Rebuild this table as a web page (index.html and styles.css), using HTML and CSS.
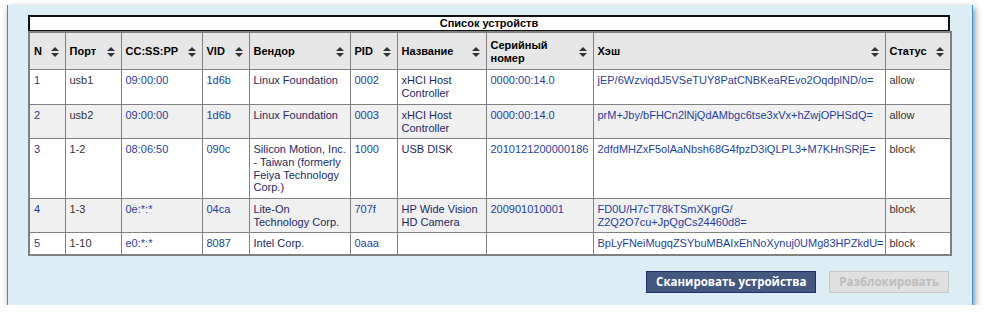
FILE: index.html
```html
<!DOCTYPE html>
<html lang="ru">
<head>
<meta charset="utf-8">
<title>Список устройств</title>
<link rel="stylesheet" href="styles.css">
</head>
<body>
<div class="panel">
  <div class="caption">Список устройств</div>
  <table class="devices">
    <colgroup>
      <col class="c-n"><col class="c-port"><col class="c-cc"><col class="c-vid"><col class="c-vendor"><col class="c-pid"><col class="c-name"><col class="c-serial"><col class="c-hash"><col class="c-status">
    </colgroup>
    <thead>
      <tr>
        <th><div class="th"><span>N</span><svg class="sort" viewBox="0 0 8 10"><path d="M4 0L8 4H0Z M0 6H8L4 10Z"/></svg></div></th>
        <th><div class="th"><span>Порт</span><svg class="sort" viewBox="0 0 8 10"><path d="M4 0L8 4H0Z M0 6H8L4 10Z"/></svg></div></th>
        <th><div class="th"><span>CC:SS:PP</span><svg class="sort" viewBox="0 0 8 10"><path d="M4 0L8 4H0Z M0 6H8L4 10Z"/></svg></div></th>
        <th><div class="th"><span>VID</span><svg class="sort" viewBox="0 0 8 10"><path d="M4 0L8 4H0Z M0 6H8L4 10Z"/></svg></div></th>
        <th><div class="th"><span>Вендор</span><svg class="sort" viewBox="0 0 8 10"><path d="M4 0L8 4H0Z M0 6H8L4 10Z"/></svg></div></th>
        <th><div class="th"><span>PID</span><svg class="sort" viewBox="0 0 8 10"><path d="M4 0L8 4H0Z M0 6H8L4 10Z"/></svg></div></th>
        <th><div class="th"><span>Название</span><svg class="sort" viewBox="0 0 8 10"><path d="M4 0L8 4H0Z M0 6H8L4 10Z"/></svg></div></th>
        <th><div class="th"><span>Серийный<br>номер</span><svg class="sort" viewBox="0 0 8 10"><path d="M4 0L8 4H0Z M0 6H8L4 10Z"/></svg></div></th>
        <th><div class="th"><span>Хэш</span><svg class="sort" viewBox="0 0 8 10"><path d="M4 0L8 4H0Z M0 6H8L4 10Z"/></svg></div></th>
        <th><div class="th"><span>Статус</span><svg class="sort" viewBox="0 0 8 10"><path d="M4 0L8 4H0Z M0 6H8L4 10Z"/></svg></div></th>
      </tr>
    </thead>
    <tbody>
      <tr>
        <td class="t-n">1</td><td class="t-plain">usb1</td><td class="t-link">09:00:00</td><td class="t-link">1d6b</td><td class="t-dark">Linux Foundation</td><td class="t-link">0002</td><td class="t-dark">xHCI Host Controller</td><td class="t-link">0000:00:14.0</td><td class="t-link">jEP/6WzviqdJ5VSeTUY8PatCNBKeaREvo2OqdplND/o=</td><td class="t-plain">allow</td>
      </tr>
      <tr class="alt">
        <td class="t-n">2</td><td class="t-plain">usb2</td><td class="t-link">09:00:00</td><td class="t-link">1d6b</td><td class="t-dark">Linux Foundation</td><td class="t-link">0003</td><td class="t-dark">xHCI Host Controller</td><td class="t-link">0000:00:14.0</td><td class="t-link">prM+Jby/bFHCn2lNjQdAMbgc6tse3xVx+hZwjOPHSdQ=</td><td class="t-plain">allow</td>
      </tr>
      <tr>
        <td class="t-n">3</td><td class="t-plain">1-2</td><td class="t-link">08:06:50</td><td class="t-link">090c</td><td class="t-dark">Silicon Motion, Inc. - Taiwan (formerly Feiya Technology Corp.)</td><td class="t-link">1000</td><td class="t-dark">USB DISK</td><td class="t-link">2010121200000186</td><td class="t-link">2dfdMHZxF5olAaNbsh68G4fpzD3iQLPL3+M7KHnSRjE=</td><td class="t-plain">block</td>
      </tr>
      <tr class="alt">
        <td class="t-n">4</td><td class="t-plain">1-3</td><td class="t-link">0e:*:*</td><td class="t-link">04ca</td><td class="t-dark">Lite-On Technology Corp.</td><td class="t-link">707f</td><td class="t-dark">HP Wide Vision HD Camera</td><td class="t-link">200901010001</td><td class="t-link">FD0U/H7cT78kTSmXKgrG/<wbr>Z2Q2O7cu+JpQgCs24460d8=</td><td class="t-plain">block</td>
      </tr>
      <tr>
        <td class="t-n">5</td><td class="t-plain">1-10</td><td class="t-link">e0:*:*</td><td class="t-link">8087</td><td class="t-dark">Intel Corp.</td><td class="t-link">0aaa</td><td class="t-dark"></td><td class="t-link"></td><td class="t-link">BpLyFNeiMugqZSYbuMBAIxEhNoXynuj0UMg83HPZkdU=</td><td class="t-plain">block</td>
      </tr>
    </tbody>
  </table>
  <div class="actions">
    <button class="btn btn-primary" type="button">Сканировать устройства</button>
    <button class="btn btn-disabled" type="button" disabled>Разблокировать</button>
  </div>
</div>
</body>
</html>
```
FILE: styles.css
```css
html, body {
  margin: 0;
  padding: 0;
  background: #ffffff;
}
body {
  padding: 5px 0 0 7px;
  font-family: "Liberation Sans", Arial, sans-serif;
}
.panel {
  box-sizing: border-box;
  width: 966px;
  height: 300px;
  background: #dcedf5;
  border-left: 1px solid #3b8fd0;
  border-right: 1px solid #3b8fd0;
  box-shadow: 2px 3px 7px rgba(0, 0, 0, 0.45);
  padding: 10px 0 0 20px;
}
.caption {
  box-sizing: border-box;
  width: 922px;
  height: 16px;
  background: #ffffff;
  border: 2px solid #111111;
  border-bottom: 1px solid #111111;
  font-size: 11px;
  font-weight: bold;
  line-height: 12px;
  text-align: center;
  color: #000;
}
.devices {
  width: 922px;
  table-layout: fixed;
  border-collapse: collapse;
  border: 2px solid #808080;
  font-size: 11px;
  line-height: 12.7px;
  background: #ffffff;
}
.devices th, .devices td {
  border: 1px solid #808080;
  vertical-align: top;
  text-align: left;
  overflow: visible;
}
.devices th {
  background: #e6e6e6;
  padding: 6px 6px 5px 4px;
  vertical-align: middle;
  font-weight: bold;
  color: #000;
}
.devices td {
  padding: 4px 3px 4px 4px;
}
.th {
  display: flex;
  align-items: center;
  justify-content: space-between;
}
.sort {
  width: 8px;
  height: 10px;
  flex: none;
  fill: #333333;
}
.alt td {
  background: #f0f0f0;
}
.c-n { width: 36px; }
.c-port { width: 56px; }
.c-cc { width: 81px; }
.c-vid { width: 47px; }
.c-vendor { width: 101px; }
.c-pid { width: 47px; }
.c-name { width: 89px; }
.c-serial { width: 107px; }
.c-hash { width: 292px; }
.c-status { width: 66px; }
.t-n { color: #2b3a8e; }
.t-plain { color: #333333; }
.t-link { color: #1f3f9e; }
.t-dark { color: #1c2a62; }
.actions {
  display: flex;
  justify-content: flex-end;
  gap: 13px;
  width: 921px;
  margin-top: 15px;
}
.btn {
  box-sizing: border-box;
  height: 22px;
  padding: 0 9px;
  font-family: "Open Sans", "Noto Sans", sans-serif;
  font-weight: bold;
  font-size: 11.5px;
  line-height: 18px;
  white-space: nowrap;
}
.btn-primary {
  background: #44577f;
  border: 1px solid #1f2f6b;
  color: #ffffff;
}
.btn-disabled {
  background: #e0e0e0;
  border: 1px solid #c8c8c8;
  color: #bdbdbd;
}
```
